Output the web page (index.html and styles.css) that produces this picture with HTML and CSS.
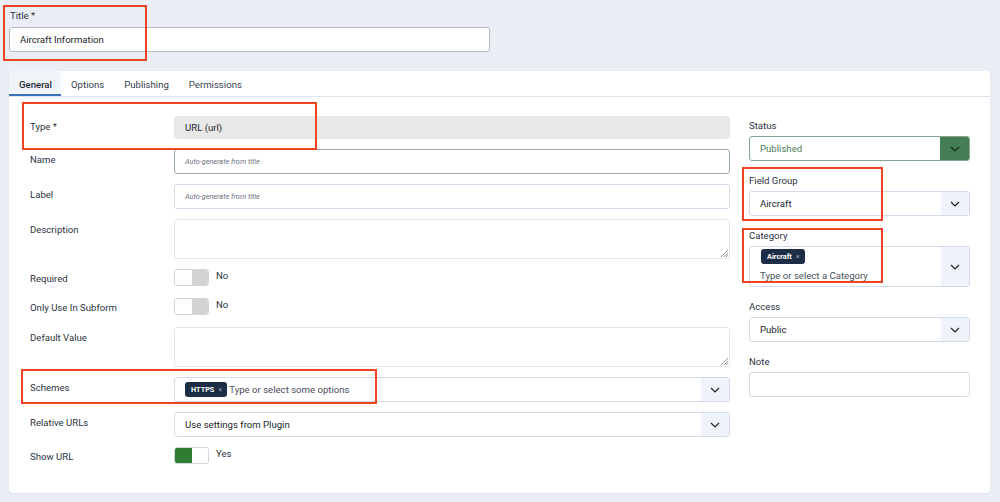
FILE: index.html
```html
<!DOCTYPE html>
<html>
<head>
<meta charset="utf-8">
<link rel="stylesheet" href="styles.css">
</head>
<body>
<div class="page">
  <div class="title-field">
    <div class="title-label">Title *</div>
    <div class="input title-input">Aircraft Information</div>
  </div>

  <div class="card">
    <div class="tabs">
      <div class="tab active">General</div>
      <div class="tab">Options</div>
      <div class="tab">Publishing</div>
      <div class="tab">Permissions</div>
    </div>
    <div class="card-body">
      <div class="main">
        <div class="row">
          <div class="label">Type *</div>
          <div class="control"><div class="input readonly">URL (url)</div></div>
        </div>
        <div class="row">
          <div class="label">Name</div>
          <div class="control"><div class="input green-border"><span class="ph">Auto-generate from title</span></div></div>
        </div>
        <div class="row">
          <div class="label">Label</div>
          <div class="control"><div class="input"><span class="ph">Auto-generate from title</span></div></div>
        </div>
        <div class="row">
          <div class="label">Description</div>
          <div class="control"><div class="input textarea"><span class="grip"></span></div></div>
        </div>
        <div class="row toggle-row">
          <div class="label">Required</div>
          <div class="control toggle-line">
            <div class="toggle"><span class="half"></span><span class="half off"></span></div>
            <span class="toggle-text">No</span>
          </div>
        </div>
        <div class="row toggle-row">
          <div class="label">Only Use In Subform</div>
          <div class="control toggle-line">
            <div class="toggle"><span class="half"></span><span class="half off"></span></div>
            <span class="toggle-text">No</span>
          </div>
        </div>
        <div class="row">
          <div class="label">Default Value</div>
          <div class="control"><div class="input textarea"><span class="grip"></span></div></div>
        </div>
        <div class="row">
          <div class="label">Schemes</div>
          <div class="control">
            <div class="input select">
              <div class="select-value">
                <span class="chip">HTTPS <span class="chip-x">×</span></span>
                <span class="chip-ph">Type or select some options</span>
              </div>
              <div class="arrow"><svg width="10" height="6" viewBox="0 0 10 6"><path d="M1 1 L5 5 L9 1" fill="none" stroke="#222" stroke-width="1.2"/></svg></div>
            </div>
          </div>
        </div>
        <div class="row">
          <div class="label">Relative URLs</div>
          <div class="control">
            <div class="input select">
              <div class="select-value">Use settings from Plugin</div>
              <div class="arrow"><svg width="10" height="6" viewBox="0 0 10 6"><path d="M1 1 L5 5 L9 1" fill="none" stroke="#222" stroke-width="1.2"/></svg></div>
            </div>
          </div>
        </div>
        <div class="row toggle-row">
          <div class="label">Show URL</div>
          <div class="control toggle-line">
            <div class="toggle"><span class="half on"></span><span class="half"></span></div>
            <span class="toggle-text">Yes</span>
          </div>
        </div>
      </div>

      <div class="side">
        <div class="group">
          <div class="side-label">Status</div>
          <div class="input select status">
            <div class="select-value">Published</div>
            <div class="arrow green"><svg width="10" height="6" viewBox="0 0 10 6"><path d="M1 1 L5 5 L9 1" fill="none" stroke="#1d2b1f" stroke-width="1.2"/></svg></div>
          </div>
        </div>
        <div class="group">
          <div class="side-label">Field Group</div>
          <div class="input select">
            <div class="select-value">Aircraft</div>
            <div class="arrow"><svg width="10" height="6" viewBox="0 0 10 6"><path d="M1 1 L5 5 L9 1" fill="none" stroke="#222" stroke-width="1.2"/></svg></div>
          </div>
        </div>
        <div class="group">
          <div class="side-label">Category</div>
          <div class="input select tall">
            <div class="select-value stack">
              <span class="chip">Aircraft <span class="chip-x">×</span></span>
              <span class="chip-ph">Type or select a Category</span>
            </div>
            <div class="arrow"><svg width="10" height="6" viewBox="0 0 10 6"><path d="M1 1 L5 5 L9 1" fill="none" stroke="#222" stroke-width="1.2"/></svg></div>
          </div>
        </div>
        <div class="group">
          <div class="side-label">Access</div>
          <div class="input select">
            <div class="select-value">Public</div>
            <div class="arrow"><svg width="10" height="6" viewBox="0 0 10 6"><path d="M1 1 L5 5 L9 1" fill="none" stroke="#222" stroke-width="1.2"/></svg></div>
          </div>
        </div>
        <div class="group">
          <div class="side-label">Note</div>
          <div class="input"></div>
        </div>
      </div>
    </div>
  </div>

  <div class="mark m-title"></div>
  <div class="mark m-type"></div>
  <div class="mark m-schemes"></div>
  <div class="mark m-fieldgroup"></div>
  <div class="mark m-category"></div>
</div>
</body>
</html>
```

FILE: styles.css
```css
* { box-sizing: border-box; }
html, body {
  margin: 0;
  padding: 0;
  background: #ebeff5;
  font-family: Roboto, "Liberation Sans", sans-serif;
  font-size: 9.6px;
  color: #22262a;
}
.page {
  position: relative;
  width: 1000px;
  height: 502px;
  padding: 10px 10px 0 9px;
  overflow: hidden;
}
.title-label {
  line-height: 12px;
  padding-left: 1px;
  color: #2b3340;
}
.title-input {
  margin-top: 5px;
  width: 481px;
  height: 25px;
  border-color: #b6bcc2 !important;
}
.input {
  display: flex;
  align-items: center;
  height: 25px;
  padding: 0 10px;
  background: #fff;
  border: 1px solid #d2dbe7;
  border-radius: 3px;
  line-height: 12px;
}
.input.readonly {
  background: #e8e8e8;
  border-color: #e8e8e8;
  height: 23px;
}
.input.green-border { border-color: #98ad9f; }
.ph {
  font-style: italic;
  font-size: 7.3px;
  color: #6b7280;
}
.input.textarea {
  height: 40px;
  position: relative;
  border-color: #e0e6ee;
}
.grip {
  position: absolute;
  right: 1px;
  bottom: 1px;
  width: 7px;
  height: 7px;
  background: linear-gradient(135deg, transparent 0 45%, #999 45% 52%, transparent 52% 65%, #999 65% 72%, transparent 72% 85%, #999 85% 92%, transparent 92%);
}
.card {
  margin-top: 19px;
  width: 981px;
  height: 422px;
  background: #fff;
  border-radius: 4px;
  box-shadow: 0 1px 2px rgba(30, 50, 90, 0.08);
}
.tabs {
  display: flex;
  height: 26px;
  border-bottom: 1px solid #dfe4ea;
}
.tab {
  padding: 1px 10px 0;
  line-height: 25px;
  color: #35404e;
}
.tab.active {
  padding-right: 9px;
  background: #f1f4f9;
  border-bottom: 2px solid #3a73b8;
  border-top-left-radius: 4px;
  font-weight: 500;
  color: #1f2a38;
}
.card-body {
  display: flex;
  gap: 19px;
  padding: 19px 20px 0 21px;
}
.main {
  width: 700px;
  display: flex;
  flex-direction: column;
  gap: 10px;
}
.row {
  display: flex;
}
.label {
  width: 144px;
  flex: none;
  line-height: 22px;
  color: #2b3340;
}
.toggle-row .label {
  line-height: 19px;
  height: 19px;
}
.control {
  flex: 1;
}
.toggle-line {
  display: flex;
  align-items: flex-start;
  height: 19px;
}
.toggle {
  display: flex;
  width: 35px;
  height: 17px;
  border: 1px solid #cdd6e1;
  border-radius: 3px;
  overflow: hidden;
}
.toggle .half { flex: 1; background: #fff; }
.toggle .half.off { background: #d3d3d3; }
.toggle .half.on { background: #2e7d32; }
.toggle-text {
  margin-left: 7px;
  line-height: 14px;
  color: #2b3340;
}
.select {
  padding: 0;
  justify-content: space-between;
  align-items: stretch;
  overflow: hidden;
}
.select-value {
  flex: 1;
  display: flex;
  align-items: center;
  padding-left: 10px;
}
.arrow {
  width: 28px;
  flex: none;
  display: flex;
  align-items: center;
  justify-content: center;
  background: #eef3fa;
}
.arrow.green { background: #457d54; width: 29px; }
.select.status { border-color: #86a58f; }
.select.status .select-value { color: #4c7b55; }
.chip {
  display: inline-flex;
  align-items: center;
  height: 15px;
  padding: 0 5px 0 6px;
  background: #1d2d45;
  color: #fff;
  font-size: 7.3px;
  font-weight: 700;
  border-radius: 3px;
  margin-right: 2px;
}
.chip-x {
  font-weight: 400;
  color: #a9b2bf;
  margin-left: 4px;
}
.chip-ph { color: #4a5060; }
.select-value.stack {
  flex-direction: column;
  align-items: flex-start;
  justify-content: flex-start;
  padding-top: 2px;
}
.select-value.stack .chip { margin-left: 1px; }
.select-value.stack .chip-ph { margin-top: 6px; }
.select.tall { height: 41px; }
.side {
  width: 221px;
  padding-top: 3px;
  display: flex;
  flex-direction: column;
  gap: 13px;
}
.side-label {
  line-height: 14px;
  margin-bottom: 3px;
  color: #2b3340;
}
.mark {
  position: absolute;
  border: 2px solid #ef4423;
}
.m-title { left: 3px; top: 5px; width: 144px; height: 56px; }
.m-type { left: 22px; top: 102px; width: 295px; height: 48px; }
.m-schemes { left: 21px; top: 369px; width: 356px; height: 35px; }
.m-fieldgroup { left: 742px; top: 167px; width: 141px; height: 54px; }
.m-category { left: 742px; top: 228px; width: 141px; height: 55px; }
```
